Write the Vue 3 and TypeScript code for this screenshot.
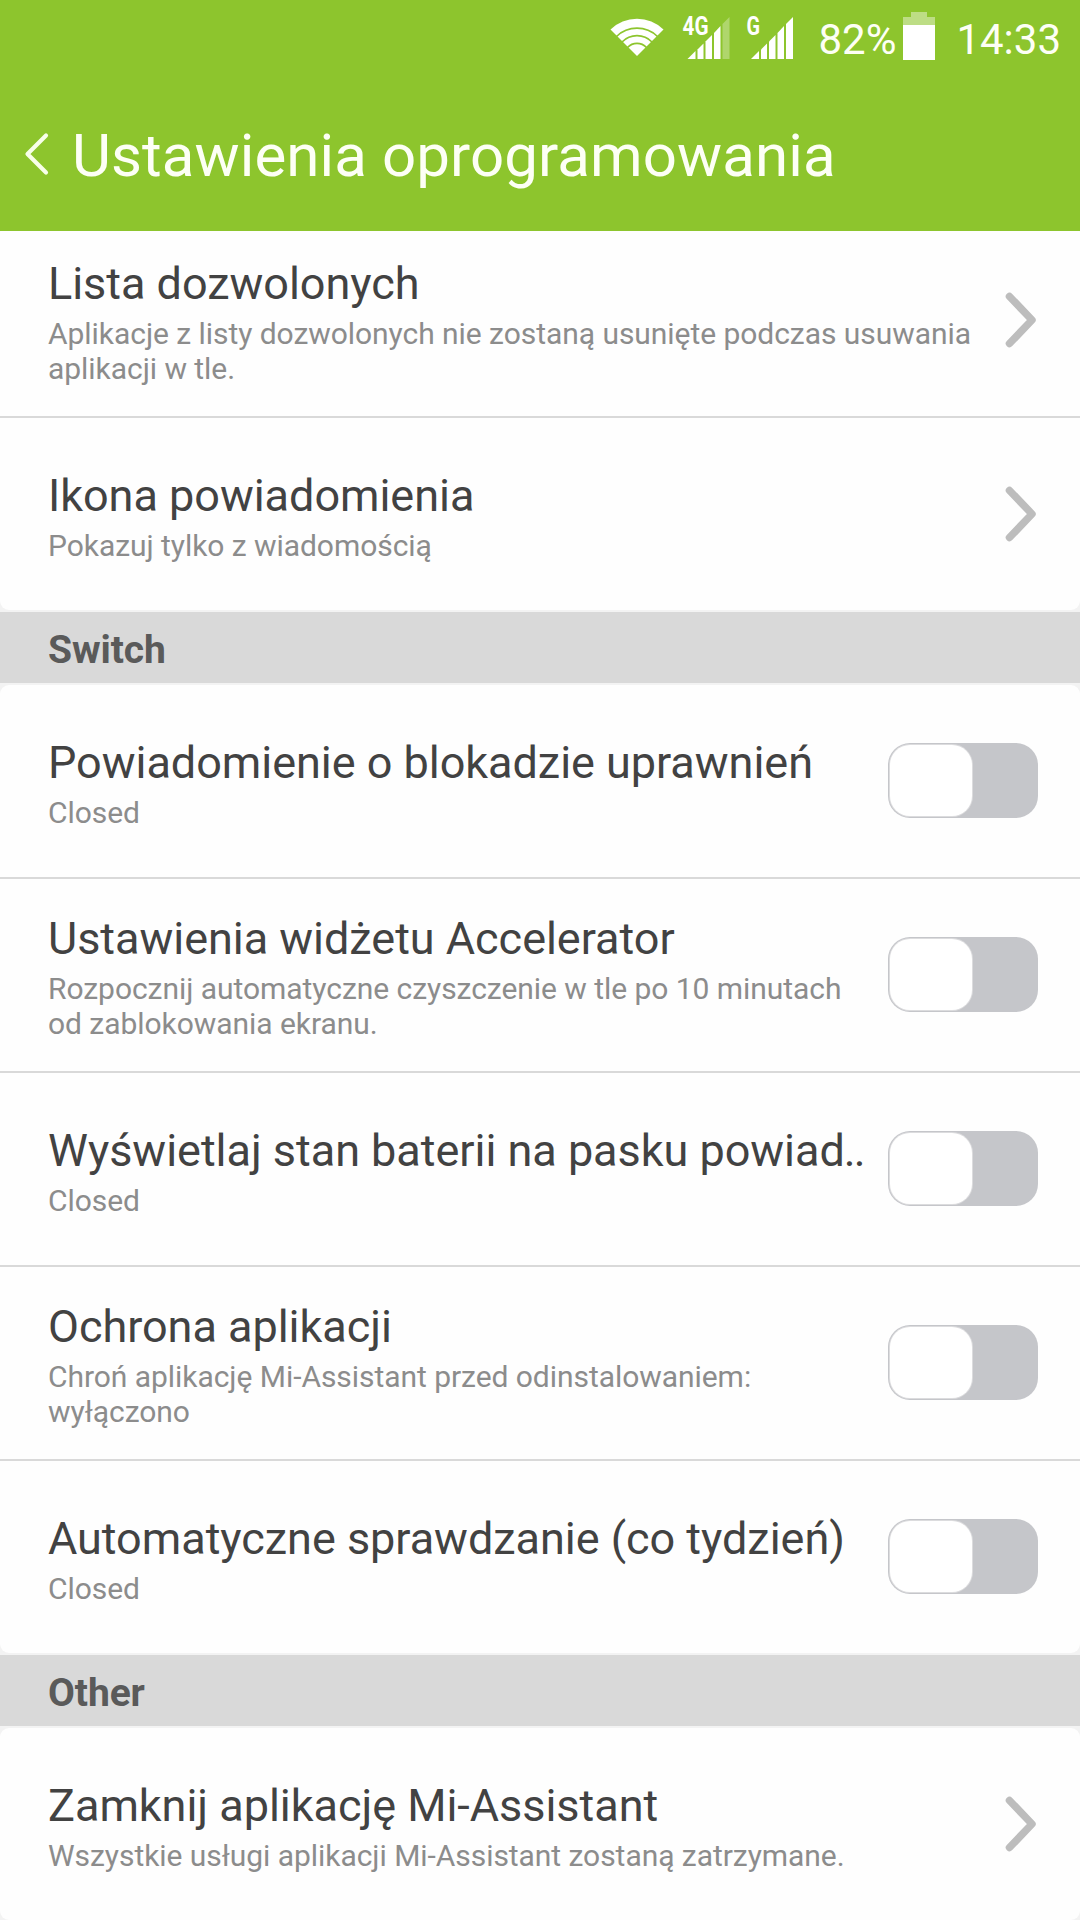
<script setup lang="ts">
interface Item {
  title: string
  note: string
  kind: 'link' | 'switch'
  clipped?: boolean
}

interface Group {
  heading?: string
  items: Item[]
}

const groups: Group[] = [
  {
    items: [
      {
        title: 'Lista dozwolonych',
        note: 'Aplikacje z listy dozwolonych nie zostaną usunięte podczas usuwania aplikacji w tle.',
        kind: 'link',
      },
      { title: 'Ikona powiadomienia', note: 'Pokazuj tylko z wiadomością', kind: 'link' },
    ],
  },
  {
    heading: 'Switch',
    items: [
      { title: 'Powiadomienie o blokadzie uprawnień', note: 'Closed', kind: 'switch' },
      {
        title: 'Ustawienia widżetu Accelerator',
        note: 'Rozpocznij automatyczne czyszczenie w tle po 10 minutach od zablokowania ekranu.',
        kind: 'switch',
      },
      { title: 'Wyświetlaj stan baterii na pasku powiad', note: 'Closed', kind: 'switch', clipped: true },
      {
        title: 'Ochrona aplikacji',
        note: 'Chroń aplikację Mi-Assistant przed odinstalowaniem: wyłączono',
        kind: 'switch',
      },
      { title: 'Automatyczne sprawdzanie (co tydzień)', note: 'Closed', kind: 'switch' },
    ],
  },
  {
    heading: 'Other',
    items: [
      {
        title: 'Zamknij aplikację Mi-Assistant',
        note: 'Wszystkie usługi aplikacji Mi-Assistant zostaną zatrzymane.',
        kind: 'link',
      },
    ],
  },
]
</script>

<template>
  <div class="screen">
    <header class="top">
      <div class="status">
        <svg class="wifi" width="54" height="40" viewBox="0 0 54 40">
          <path d="M27 38 L0.5 11.5 A38 38 0 0 1 53.5 11.5 Z" fill="#fff" />
          <g fill="none" stroke="#8dc52d" stroke-width="1.7">
            <path d="M6.500 18.500 A29.500 29.500 0 0 1 47.500 18.500" />
            <path d="M12 24 A21 21 0 0 1 42 24" />
            <path d="M17.500 29.500 A13 13 0 0 1 36.500 29.500" />
          </g>
        </svg>
        <svg class="signal" width="48" height="54" viewBox="0 -10 48 54">
          <text class="net" x="0.5" y="19" textLength="26" lengthAdjust="spacingAndGlyphs">4G</text>
          <g fill="#fff">
            <path d="M5.500 43 L13.500 35 V43 Z" />
            <path d="M15.500 33.500 L21.500 27.500 V43 H15.500 Z" />
            <path d="M23.500 25.500 L30 19 V43 H23.500 Z" />
            <path d="M32 17 L38.500 10 V43 H32 Z" />
            <path d="M40.500 8 L47.500 1 V43 H40.500 Z" opacity=".3" />
          </g>
        </svg>
        <svg class="signal second" width="48" height="54" viewBox="0 -10 48 54">
          <text class="net" x="0.5" y="19" textLength="13.500" lengthAdjust="spacingAndGlyphs">G</text>
          <g fill="#fff">
            <path d="M5 43 L13 35 V43 Z" />
            <path d="M15 33.500 L21 27.500 V43 H15 Z" />
            <path d="M23 25.500 L29.500 19 V43 H23 Z" />
            <path d="M31.500 17 L38 10 V43 H31.500 Z" />
            <path d="M40 8 L47 1 V43 H40 Z" />
          </g>
        </svg>
        <span class="percent">82%</span>
        <svg class="battery" width="32" height="48" viewBox="0 0 32 48">
          <path d="M8 0 H24 V5 H32 V13 H0 V5 H8 Z" fill="#fff" opacity=".42" />
          <path d="M0 13 H32 V48 H0 Z" fill="#fff" />
        </svg>
        <span class="clock">14:33</span>
      </div>
      <div class="bar">
        <svg class="back" width="26" height="44" viewBox="0 0 26 44">
          <path d="M23 3.500 L4.500 22 L23 40.500" fill="none" stroke="#f8ffe9" stroke-width="4.200" stroke-linecap="round" stroke-linejoin="round" />
        </svg>
        <h1>Ustawienia oprogramowania</h1>
      </div>
    </header>

    <main class="list">
      <section v-for="(group, g) in groups" :key="g">
        <h2 v-if="group.heading">{{ group.heading }}</h2>
        <div class="card">
          <div v-for="item in group.items" :key="item.title" class="row" :class="item.kind">
            <div class="text">
              <div class="title">{{ item.title }}<span v-if="item.clipped" class="dots">..</span></div>
              <div class="note">{{ item.note }}</div>
            </div>
            <svg v-if="item.kind === 'link'" class="chevron" width="32" height="56" viewBox="0 0 32 56">
              <path d="M4.500 4.500 L27 28 L4.500 51.500" fill="none" stroke="#bdbdbd" stroke-width="7.500" stroke-linecap="round" stroke-linejoin="round" />
            </svg>
            <div v-else class="toggle"><div class="knob"></div></div>
          </div>
        </div>
      </section>
    </main>
  </div>
</template>

<style>
body {
  margin: 0;
  background: #f3f3f3;
}
</style>

<style scoped>
.screen {
  display: flex;
  flex-direction: column;
  width: 1080px;
  height: 1920px;
  overflow: hidden;
  background: #f3f3f3;
  font-family: Roboto, "Noto Sans", sans-serif;
}
.top {
  flex: none;
  height: 231px;
  background: #8dc52d;
  color: #fdfff5;
  position: relative;
  z-index: 1;
}
.status {
  display: flex;
  align-items: flex-start;
  justify-content: flex-end;
  height: 78px;
  padding-right: 19px;
}
.wifi {
  margin: 18px 18px 0 0;
}
.signal {
  margin: 6px 16px 0 0;
}
.signal.second {
  margin-right: 24px;
}
.net {
  font: 700 25px Roboto, sans-serif;
  fill: #fff;
}
.percent,
.clock {
  margin-top: 15px;
  font-size: 42px;
  line-height: 50px;
  white-space: nowrap;
}
.battery {
  margin: 12px 21px 0 7px;
}
.bar {
  display: flex;
  align-items: center;
  height: 154px;
  padding: 0 0 0 23px;
}
.back {
  margin-top: -2px;
}
h1 {
  margin: 2px 0 0 23px;
  font-size: 60px;
  line-height: 70px;
  font-weight: 400;
  letter-spacing: 0.1px;
  white-space: nowrap;
}
.list {
  flex: none;
  margin-top: -7px;
}
h2 {
  box-sizing: border-box;
  height: 71px;
  margin: 2px 0;
  padding: 2px 0 0 48px;
  background: #d9d9d9;
  color: #5a5a5a;
  font-size: 39px;
  line-height: 73px;
  font-weight: 700;
  letter-spacing: -0.1px;
}
.card {
  overflow: hidden;
  border-radius: 9px;
  background: #fefefe;
}
.row {
  display: flex;
  align-items: center;
  height: 192px;
  padding-left: 48px;
}
.row + .row {
  border-top: 2px solid #d9d9d9;
}
.text {
  flex: 1;
  min-width: 0;
  padding-top: 3px;
}
.title {
  color: #424242;
  font-size: 45px;
  line-height: 53px;
  letter-spacing: -0.03px;
  white-space: nowrap;
}
.dots {
  margin-left: -1px;
  letter-spacing: -2px;
}
.note {
  margin-top: 6px;
  color: #8c8c8c;
  font-size: 30px;
  line-height: 35px;
  letter-spacing: -0.05px;
}
.chevron {
  flex: none;
  margin: -1px 43px 0 26px;
}
.toggle {
  box-sizing: border-box;
  flex: none;
  width: 150px;
  height: 75px;
  margin: -2px 42px 0 20px;
  padding: 2px;
  border-radius: 22px;
  background: #c5c6ca;
}
.knob {
  width: 82px;
  height: 71px;
  border-radius: 20px;
  background: #fff;
  box-shadow: 0 0 0 1px #dcdcde;
}
</style>
